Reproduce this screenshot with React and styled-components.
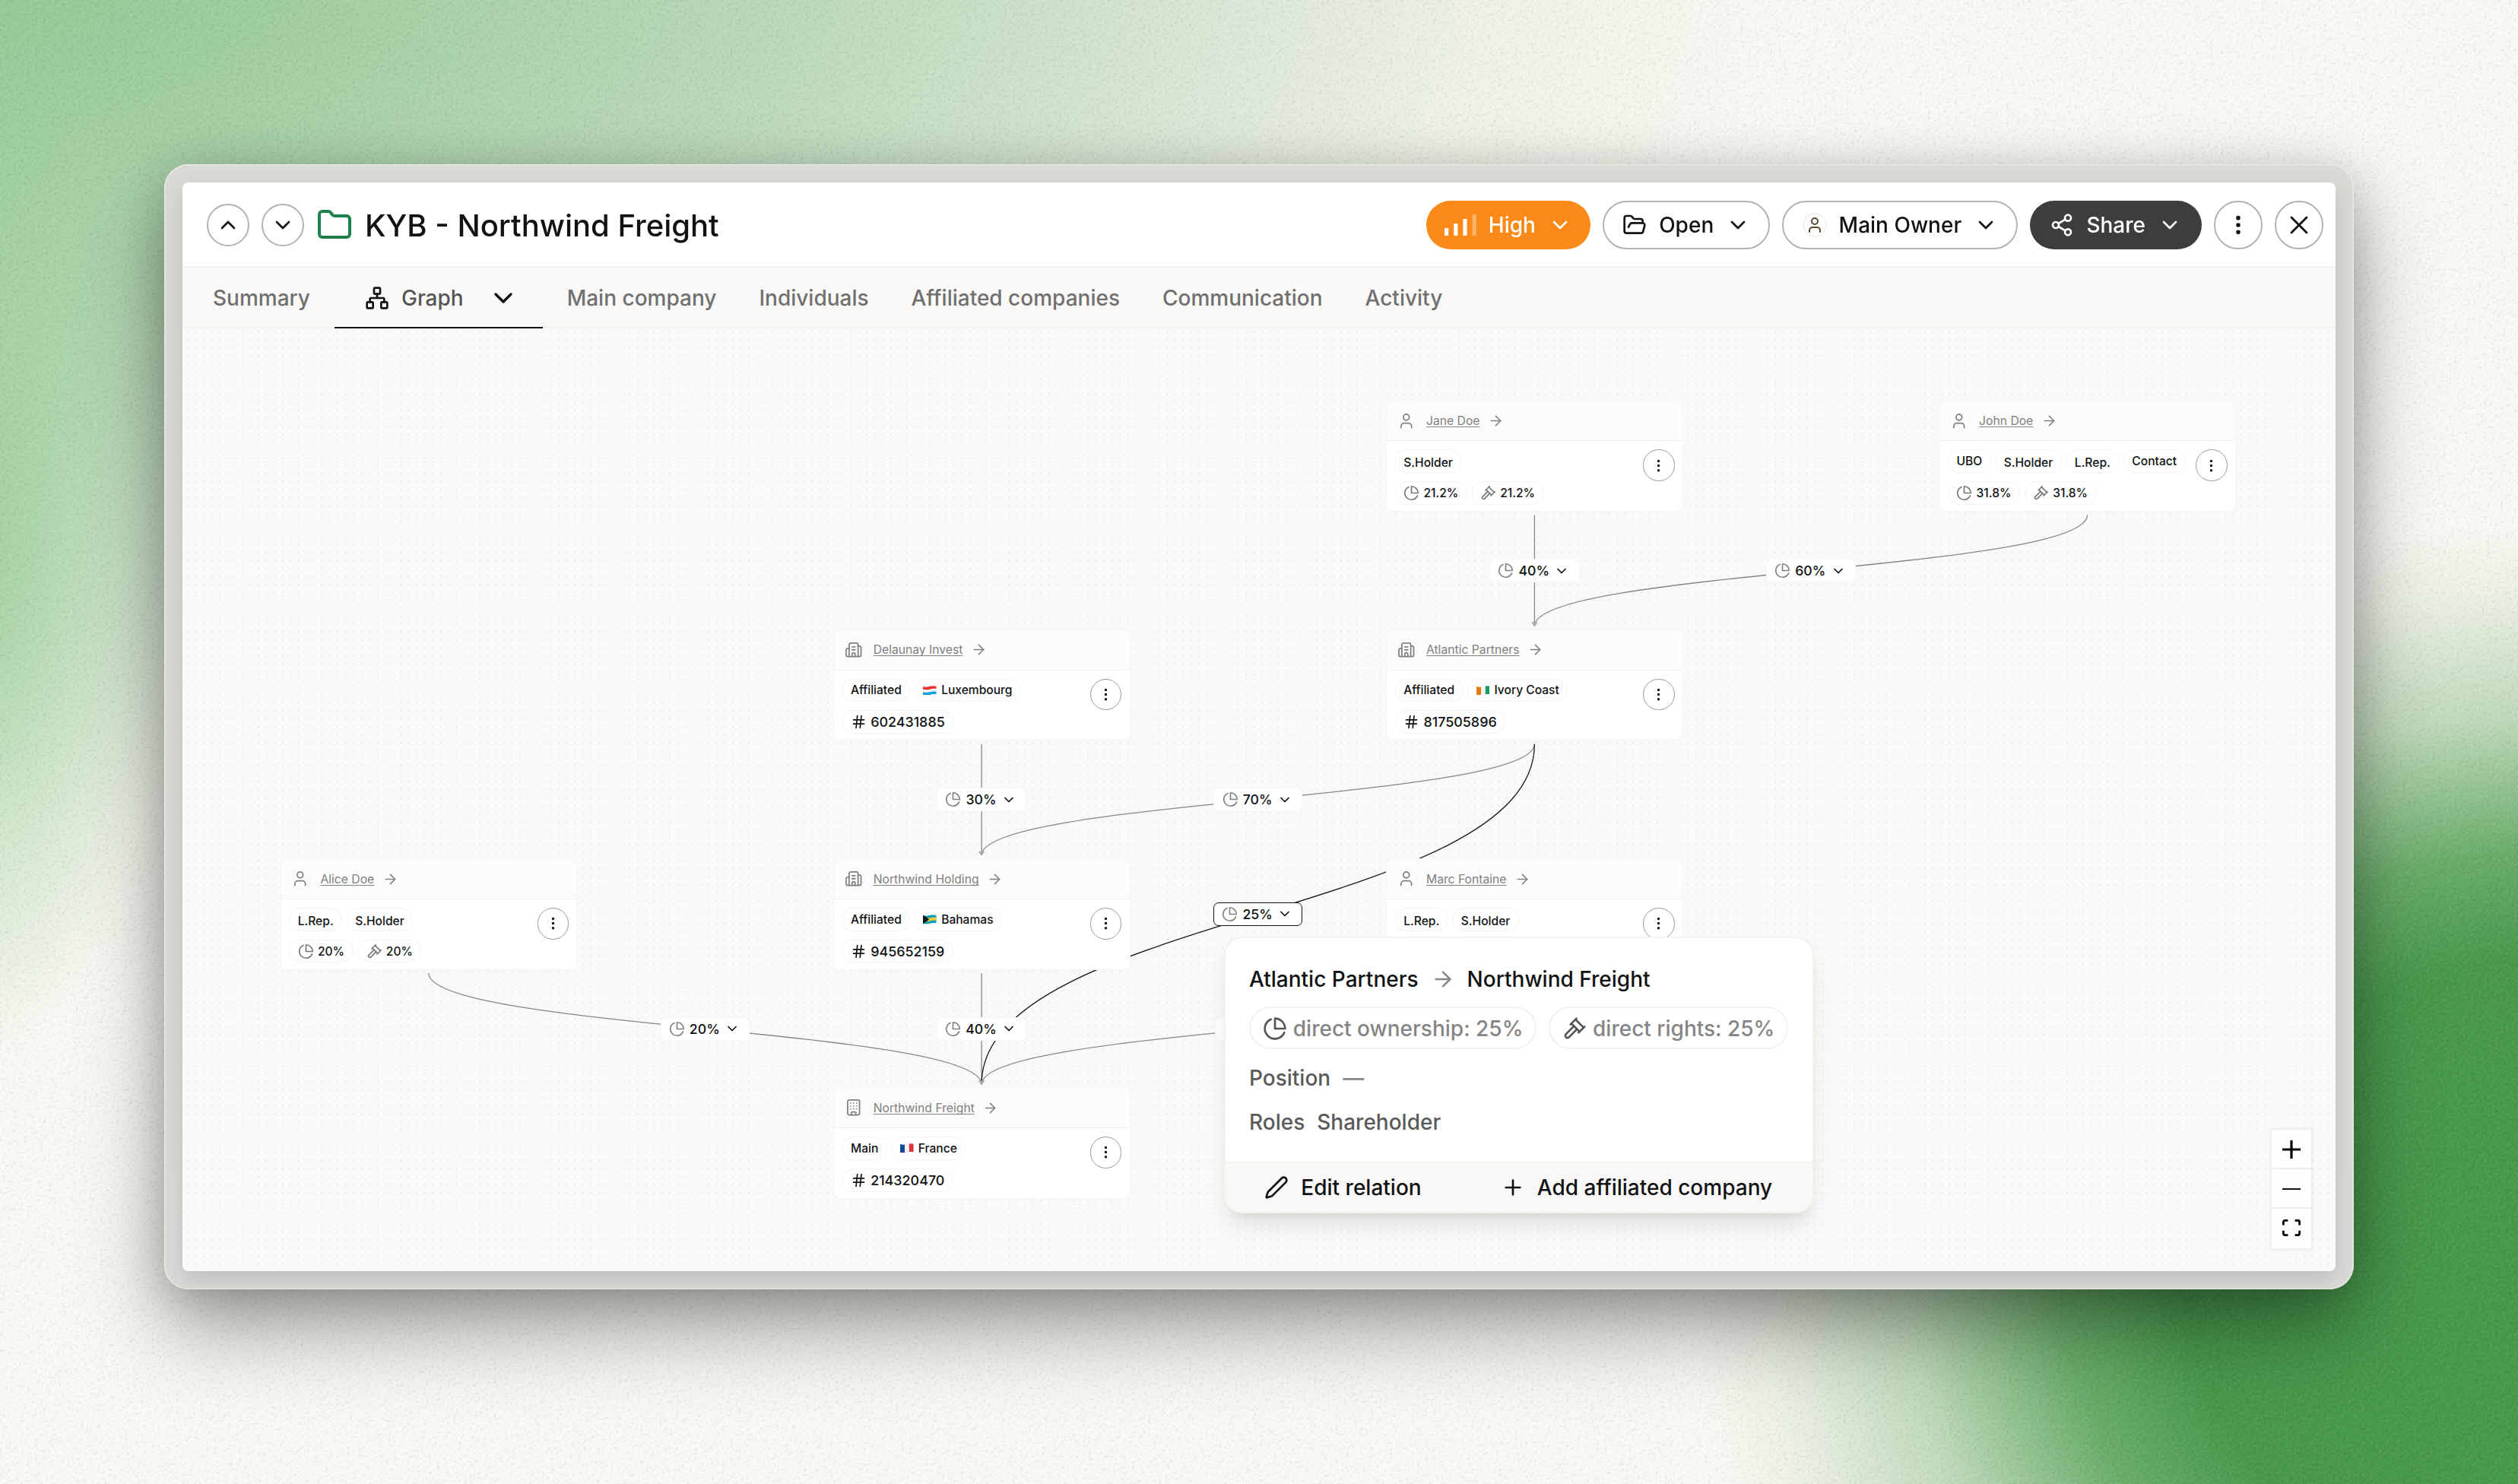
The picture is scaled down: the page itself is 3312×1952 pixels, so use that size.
import React from "react";
import styled, { createGlobalStyle } from "styled-components";
import {
  ArrowRight,
  Building,
  Building2,
  ChevronDown,
  ChevronUp,
  EllipsisVertical,
  Folder,
  FolderOpen,
  Hash,
  Network,
  Pen,
  Plus,
  Share2,
  User,
  X,
} from "lucide-react";

const COLS = [128.8, 856.1, 1583.4, 2310.5];
const ROWS = [94.3, 395.6, 697, 998.2];
const CARD_W = 390.6;
const CARD_H = 146.6;

const nodes = [
  {
    id: "jane",
    name: "Jane Doe",
    col: 2,
    row: 0,
    icon: User,
    tags: ["S.Holder"],
    share: "21.2%",
  },
  {
    id: "john",
    name: "John Doe",
    col: 3,
    row: 0,
    icon: User,
    tags: ["UBO", "S.Holder", "L.Rep.", "Contact"],
    share: "31.8%",
  },
  {
    id: "delaunay",
    name: "Delaunay Invest",
    col: 1,
    row: 1,
    icon: Building2,
    tags: ["Affiliated"],
    country: "Luxembourg",
    flag: "lu",
    number: "602431885",
  },
  {
    id: "atlantic",
    name: "Atlantic Partners",
    col: 2,
    row: 1,
    icon: Building2,
    tags: ["Affiliated"],
    country: "Ivory Coast",
    flag: "ci",
    number: "817505896",
  },
  {
    id: "alice",
    name: "Alice Doe",
    col: 0,
    row: 2,
    icon: User,
    tags: ["L.Rep.", "S.Holder"],
    share: "20%",
  },
  {
    id: "holding",
    name: "Northwind Holding",
    col: 1,
    row: 2,
    icon: Building2,
    tags: ["Affiliated"],
    country: "Bahamas",
    flag: "bs",
    number: "945652159",
  },
  {
    id: "marc",
    name: "Marc Fontaine",
    col: 2,
    row: 2,
    icon: User,
    tags: ["L.Rep.", "S.Holder"],
    share: "15%",
  },
  {
    id: "freight",
    name: "Northwind Freight",
    col: 1,
    row: 3,
    icon: Building,
    tags: ["Main"],
    country: "France",
    flag: "fr",
    number: "214320470",
  },
];

const edges = [
  { from: [2, 0], to: [2, 1], label: "40%" },
  { from: [3, 0], to: [2, 1], label: "60%" },
  { from: [1, 1], to: [1, 2], label: "30%" },
  { from: [2, 1], to: [1, 2], label: "70%" },
  { from: [0, 2], to: [1, 3], label: "20%" },
  { from: [1, 2], to: [1, 3], label: "40%" },
  { from: [2, 2], to: [1, 3], label: "15%" },
  { from: [2, 1], to: [1, 3], label: "25%", selected: true },
];

function edgePoints({ from, to }) {
  return {
    sx: COLS[from[0]] + CARD_W / 2 - 0.3,
    sy: ROWS[from[1]] + CARD_H + 4.5,
    tx: COLS[to[0]] + CARD_W / 2 - 0.3,
    ty: ROWS[to[1]] - 4,
  };
}

function PieIcon({ size }) {
  return (
    <LineIcon viewBox="0 0 24 24" $size={size}>
      <path d="M21.21 15.89A10 10 0 1 1 8 2.83" />
      <path d="M22 12A10 10 0 0 0 12 2v10z" />
    </LineIcon>
  );
}

function GavelIcon({ size }) {
  return (
    <LineIcon viewBox="0 0 24 24" $size={size}>
      <path d="m14.5 12.5-8 8a2.119 2.119 0 1 1-3-3l8-8" />
      <path d="m16 16 6-6" />
      <path d="m8 8 6-6" />
      <path d="m9 7 8 8" />
      <path d="m21 11-8-8" />
    </LineIcon>
  );
}

function Flag({ code }) {
  return (
    <FlagIcon viewBox="0 0 26 18">
      <clipPath id={`wave-${code}`}>
        <path d="M0 1.5C5 3 8 2.6 13 1.2S21 .2 26 1v15.6c-5-.8-8-.4-13 .9s-8 1.4-13 .1z" />
      </clipPath>
      <g clipPath={`url(#wave-${code})`}>
        {code === "fr" && (
          <>
            <rect width="26" height="18" fill="#f3f3f3" />
            <rect width="8.7" height="18" fill="#11499c" />
            <rect x="17.3" width="8.7" height="18" fill="#dd3038" />
          </>
        )}
        {code === "ci" && (
          <>
            <rect width="26" height="18" fill="#f3f3f3" />
            <rect width="8.7" height="18" fill="#e07a12" />
            <rect x="17.3" width="8.7" height="18" fill="#0c9b62" />
          </>
        )}
        {code === "lu" && (
          <>
            <rect width="26" height="18" fill="#f3f3f3" />
            <path d="M0 0h26v6c-5-.8-8-.4-13 .8S5 8 0 7z" fill="#e8312f" />
            <path d="M0 18V12.4c5 1 8 .8 13-.4s8-1.4 13-.6V18z" fill="#14a0dc" />
          </>
        )}
        {code === "bs" && (
          <>
            <rect width="26" height="18" fill="#12a0b5" />
            <path
              d="M0 7c5 1 8 .8 13-.4S21 5.2 26 6v5.4c-5-.8-8-.4-13 .8S5 13.4 0 12.4z"
              fill="#f6cf38"
            />
            <path d="M0 0l12 9.6L0 18z" fill="#15171a" />
          </>
        )}
      </g>
    </FlagIcon>
  );
}

function GraphNode({ node }) {
  const Icon = node.icon;
  return (
    <Card $col={node.col} $row={node.row}>
      <CardHead>
        <Avatar>
          <Icon size={23.5} strokeWidth={1.8} />
        </Avatar>
        <CardName>{node.name}</CardName>
        <ArrowRight size={21} strokeWidth={1.8} />
      </CardHead>
      <CardBody>
        <CardRows>
          <PillRow>
            {node.tags.map((tag) => (
              <Pill key={tag} $low={tag.includes(".")}>
                {tag}
              </Pill>
            ))}
            {node.country && (
              <Pill>
                <Flag code={node.flag} />
                {node.country}
              </Pill>
            )}
          </PillRow>
          <PillRow>
            {node.share && (
              <>
                <Pill>
                  <PieIcon size={21} />
                  {node.share}
                </Pill>
                <Pill>
                  <GavelIcon size={21} />
                  {node.share}
                </Pill>
              </>
            )}
            {node.number && (
              <Pill $number>
                <Hash size={21} strokeWidth={1.9} />
                {node.number}
              </Pill>
            )}
          </PillRow>
        </CardRows>
        <NodeMenu>
          <EllipsisVertical size={21} strokeWidth={2} />
        </NodeMenu>
      </CardBody>
    </Card>
  );
}

function RelationPopup() {
  return (
    <Popup>
      <PopupBody>
        <PopupTitle>
          Atlantic Partners
          <ArrowRight size={32} strokeWidth={1.9} />
          Northwind Freight
        </PopupTitle>
        <PopupChips>
          <Chip>
            <PieIcon size={32} />
            direct ownership: 25%
          </Chip>
          <Chip>
            <GavelIcon size={32} />
            direct rights: 25%
          </Chip>
        </PopupChips>
        <PopupLine>
          Position <Muted>—</Muted>
        </PopupLine>
        <PopupLine>
          Roles <span>Shareholder</span>
        </PopupLine>
      </PopupBody>
      <PopupFooter>
        <FooterAction $grow={309}>
          <Pen size={32} />
          Edit relation
        </FooterAction>
        <FooterAction $grow={463}>
          <Plus size={32} />
          Add affiliated company
        </FooterAction>
      </PopupFooter>
    </Popup>
  );
}

function Graph() {
  return (
    <Canvas>
      <Layer>
        <defs>
          <pattern
            id="dots"
            x="1.8"
            y="-0.9"
            width="10.389"
            height="10.389"
            patternUnits="userSpaceOnUse"
          >
            <circle cx="5.195" cy="5.195" r="0.65" fill="#aee0cc" />
          </pattern>
        </defs>
        <rect width="100%" height="100%" fill="url(#dots)" />
        {edges.map((edge) => {
          const { sx, sy, tx, ty } = edgePoints(edge);
          const my = (sy + ty) / 2;
          return (
            <g key={`${edge.from}-${edge.to}`}>
              <Edge
                d={`M${sx} ${sy}C${sx} ${my} ${tx} ${my} ${tx} ${ty}`}
                $selected={edge.selected}
              />
              <path
                d={`M${tx - 3.8} ${ty - 5}h7.6l-3 4.6h-1.6z`}
                fill="#a9a9ad"
              />
            </g>
          );
        })}
      </Layer>
      {edges.map((edge) => {
        const { sx, sy, tx, ty } = edgePoints(edge);
        return (
          <EdgeAnchor
            key={`${edge.from}-${edge.to}`}
            style={{ left: (sx + tx) / 2, top: (sy + ty) / 2 }}
          >
            <EdgeLabel $selected={edge.selected}>
              <PieIcon size={21} />
              {edge.label}
              <ChevronDown size={20} strokeWidth={2.1} />
            </EdgeLabel>
          </EdgeAnchor>
        );
      })}
      {nodes.map((node) => (
        <GraphNode key={node.id} node={node} />
      ))}
      <RelationPopup />
      <ZoomControls>
        <ZoomButton>
          <svg viewBox="0 0 32 32" width="24">
            <path d="M32 18.133H18.133V32h-4.266V18.133H0v-4.266h13.867V0h4.266v13.867H32z" />
          </svg>
        </ZoomButton>
        <ZoomButton>
          <MinusBar />
        </ZoomButton>
        <ZoomButton>
          <svg viewBox="0 0 32 30" width="24">
            <path d="M3.692 4.63c0-.53.4-.938.939-.938h5.215V0H4.708C2.13 0 0 2.054 0 4.63v5.216h3.692V4.631zM27.354 0h-5.2v3.692h5.17c.53 0 .984.4.984.939v5.215H32V4.631A4.624 4.624 0 0027.354 0zm.954 24.83c0 .532-.4.94-.939.94h-5.215v3.768h5.215c2.577 0 4.631-2.13 4.631-4.707v-5.139h-3.692v5.139zm-23.677.94c-.531 0-.939-.4-.939-.94v-5.138H0v5.139c0 2.577 2.13 4.707 4.708 4.707h5.138V25.77H4.631z" />
          </svg>
        </ZoomButton>
      </ZoomControls>
    </Canvas>
  );
}

function Header() {
  return (
    <HeaderBar>
      <HeaderLeft>
        <NavButton>
          <ChevronUp size={32} />
        </NavButton>
        <NavButton>
          <ChevronDown size={32} />
        </NavButton>
        <Title>
          <Folder size={48} />
          KYB - Northwind Freight
        </Title>
      </HeaderLeft>
      <HeaderRight>
        <ActionButton $color="#fff" $background="#fc8a19" $inset={24}>
          <Bars viewBox="0 0 42 28">
            <rect y="18" width="5.2" height="10" rx="1" />
            <rect x="12.2" y="12" width="5.2" height="16" rx="1" />
            <rect x="24.4" y="6" width="5.2" height="22" rx="1" />
            <rect x="36.6" width="5.2" height="28" rx="1" opacity="0.35" />
          </Bars>
          High
          <ChevronDown size={32} />
        </ActionButton>
        <ActionButton $outlined>
          <FolderOpen size={32} />
          Open
          <ChevronDown size={32} />
        </ActionButton>
        <ActionButton $outlined>
          <OwnerAvatar>
            <User size={24} />
          </OwnerAvatar>
          Main Owner
          <ChevronDown size={32} />
        </ActionButton>
        <ActionButton $color="#fff" $background="#3d3d3d" $inset={26}>
          <Share2 size={32} />
          Share
          <ChevronDown size={32} />
        </ActionButton>
        <RoundButton>
          <EllipsisVertical size={32} strokeWidth={2.2} />
        </RoundButton>
        <RoundButton>
          <X size={40} strokeWidth={1.7} />
        </RoundButton>
      </HeaderRight>
    </HeaderBar>
  );
}

function Tabs() {
  return (
    <TabBar>
      <Tab>Summary</Tab>
      <ActiveTab>
        <Network size={32} />
        <span>Graph</span>
        <ChevronDown size={40} />
      </ActiveTab>
      <Tab>Main company</Tab>
      <Tab>Individuals</Tab>
      <Tab>Affiliated companies</Tab>
      <Tab>Communication</Tab>
      <Tab>Activity</Tab>
    </TabBar>
  );
}

export default function App() {
  return (
    <Backdrop>
      <GlobalStyle />
      <Grain>
        <filter
          id="grain"
          x="0"
          y="0"
          width="100%"
          height="100%"
          colorInterpolationFilters="sRGB"
        >
          <feTurbulence
            type="fractalNoise"
            baseFrequency="0.28"
            numOctaves="3"
          />
          <feColorMatrix
            values="1.1 1.1 1.1 0 -1.15
                    1.1 1.1 1.1 0 -1.15
                    1.1 1.1 1.1 0 -1.15
                    0 0 0 0 1"
          />
        </filter>
        <rect width="100%" height="100%" filter="url(#grain)" />
      </Grain>
      <Frame>
        <Screen>
          <Header />
          <Tabs />
          <Graph />
        </Screen>
      </Frame>
    </Backdrop>
  );
}

const GlobalStyle = createGlobalStyle`
  * {
    box-sizing: border-box;
  }
  body {
    margin: 0;
    font-family: Inter, "Liberation Sans", sans-serif;
    color: #111214;
  }
  svg {
    display: block;
    flex-shrink: 0;
  }
`;

const Backdrop = styled.div`
  width: 3312px;
  height: 1952px;
  position: relative;
  overflow: hidden;
  display: flex;
  align-items: flex-start;
  padding: 216px 0 0 216px;
  background:
    radial-gradient(
      ellipse 34% 51% at 101% 86%,
      #45994a 0%,
      #48994c 42%,
      rgba(80, 160, 82, 0.85) 56%,
      rgba(120, 180, 118, 0.45) 74%,
      rgba(150, 195, 146, 0.15) 90%,
      rgba(160, 200, 155, 0) 100%
    ),
    radial-gradient(
      ellipse 7.5% 34% at -1% 38%,
      rgba(125, 195, 125, 0.55) 0%,
      rgba(140, 205, 140, 0.33) 50%,
      rgba(160, 210, 158, 0) 100%
    ),
    radial-gradient(
      ellipse 76% 76% at -4% -8%,
      #8ac489 0%,
      #a2cfa2 25%,
      #bbd9ba 48%,
      rgba(206, 225, 203, 0.85) 66%,
      rgba(228, 236, 221, 0.5) 84%,
      rgba(247, 246, 240, 0) 100%
    ),
    #faf8f3;
`;

const Grain = styled.svg`
  position: absolute;
  inset: 0;
  width: 100%;
  height: 100%;
  opacity: 0.06;
  mix-blend-mode: hard-light;
`;

const Frame = styled.div`
  position: relative;
  width: 2880px;
  height: 1480px;
  padding: 24px;
  border-radius: 32px;
  background: linear-gradient(#dad9d3, #dadad8);
  box-shadow:
    inset 0 0 0 1.5px #e9e8e4,
    0 52px 110px rgba(0, 0, 0, 0.36),
    0 10px 60px rgba(0, 0, 0, 0.16);
`;

const Screen = styled.div`
  display: flex;
  flex-direction: column;
  width: 2832px;
  height: 1432px;
  border-radius: 8px;
  overflow: hidden;
  background: #fff;
  box-shadow: 0 12px 28px rgba(0, 0, 0, 0.13);
`;

const HeaderBar = styled.header`
  display: flex;
  align-items: center;
  justify-content: space-between;
  height: 112px;
  padding: 2px 16px 0 32px;
  border-bottom: 2px solid #f3f2ee;
`;

const HeaderLeft = styled.div`
  display: flex;
  align-items: center;
  gap: 16px;
`;

const HeaderRight = styled(HeaderLeft)``;

const NavButton = styled.button`
  display: flex;
  align-items: center;
  justify-content: center;
  width: 56px;
  height: 56px;
  padding: 0;
  border: 2px solid #b3b3b3;
  border-radius: 50%;
  background-color: #fff;
  color: #111214;
`;

const RoundButton = styled(NavButton)`
  width: 64px;
  height: 64px;
`;

const Title = styled.h1`
  display: flex;
  align-items: center;
  gap: 16px;
  margin: 0;
  font-size: 40px;
  font-weight: 500;
  svg {
    color: #1f8049;
  }
`;

const ActionButton = styled.button`
  display: flex;
  align-items: center;
  gap: 16px;
  height: 64px;
  padding: 0 ${({ $inset }) => $inset || 24.2}px;
  border: ${({ $outlined }) => ($outlined ? "2px solid #b3b3b3" : "none")};
  border-radius: 32px;
  background-color: ${({ $background }) => $background || "#fff"};
  color: ${({ $color }) => $color || "#111214"};
  font-family: inherit;
  font-size: 28px;
  font-weight: 500;
`;

const Bars = styled.svg`
  width: 42px;
  height: 28px;
  fill: currentColor;
`;

const OwnerAvatar = styled.span`
  display: flex;
  align-items: center;
  justify-content: center;
  width: 32px;
  height: 32px;
  border: 2px solid #f3f1ea;
  border-radius: 50%;
  color: #56482f;
`;

const TabBar = styled.nav`
  display: flex;
  flex-shrink: 0;
  gap: 56px;
  height: 80px;
  padding-left: 40px;
  border-bottom: 2px solid #f3f2ec;
  background-color: #faf9f7;
`;

const Tab = styled.div`
  display: flex;
  align-items: center;
  padding-top: 2px;
  font-size: 28px;
  font-weight: 500;
  color: #707070;
`;

const ActiveTab = styled(Tab)`
  height: 80px;
  margin: 0 -24px;
  padding: 2px 32px 0 40px;
  border-bottom: 2px solid #111214;
  color: #555;
  svg {
    color: #111214;
  }
  span {
    margin: 0 32px 0 16px;
  }
`;

const Canvas = styled.main`
  position: relative;
  flex: 1;
  background-color: #faf9f8;
`;

const Layer = styled.svg`
  position: absolute;
  inset: 0;
  width: 100%;
  height: 100%;
`;

const Edge = styled.path`
  fill: none;
  stroke: ${({ $selected }) => ($selected ? "#18191b" : "#868686")};
  stroke-width: 1.3;
`;

const LineIcon = styled.svg`
  width: ${({ $size }) => $size}px;
  height: ${({ $size }) => $size}px;
  fill: none;
  stroke: currentColor;
  stroke-width: ${({ $size }) => ($size > 24 ? 2 : 1.9)};
  stroke-linecap: round;
  stroke-linejoin: round;
`;

const FlagIcon = styled.svg`
  width: 17.8px;
  height: 12.4px;
  margin-right: 6px;
`;

const EdgeAnchor = styled.div`
  position: absolute;
  display: flex;
  align-items: center;
  justify-content: center;
  width: 0;
  height: 0;
`;

const EdgeLabel = styled.div`
  display: flex;
  flex-shrink: 0;
  align-items: center;
  height: 31px;
  padding: 0 12.3px 0 10.3px;
  border: 1px solid ${({ $selected }) => ($selected ? "#111214" : "#f7f6f5")};
  border-radius: 7px;
  background-color: #fff;
  font-size: 17.7px;
  font-weight: 500;
  svg:first-child {
    margin-right: 6px;
    color: #808080;
  }
  svg:last-child {
    margin-left: 6.3px;
  }
`;

const Card = styled.article`
  position: absolute;
  left: ${({ $col }) => COLS[$col]}px;
  top: ${({ $row }) => ROWS[$row]}px;
  width: ${CARD_W}px;
  height: ${CARD_H}px;
  border: 1px solid #f5f5f3;
  border-radius: 10px;
  background-color: #fff;
  overflow: hidden;
`;

const CardHead = styled.div`
  display: flex;
  align-items: center;
  height: 53px;
  padding-left: 10.4px;
  border-bottom: 1px solid #f1f1ee;
  background-color: #fcfcfc;
  color: #808080;
`;

const Avatar = styled.span`
  display: flex;
  align-items: center;
  justify-content: center;
  width: 30px;
  height: 30px;
  border: 1px solid #f5f5f4;
  border-radius: 50%;
`;

const CardName = styled.a`
  margin: 0 10.6px 0 11.2px;
  font-size: 15.7px;
  text-decoration: underline;
  text-decoration-skip-ink: none;
  text-underline-offset: 2px;
`;

const CardBody = styled.div`
  display: flex;
  align-items: flex-start;
  justify-content: space-between;
  padding: 11px 10.4px;
`;

const CardRows = styled.div`
  display: flex;
  flex-direction: column;
  gap: 11px;
`;

const PillRow = styled.div`
  display: flex;
  gap: 5.6px;
`;

const Pill = styled.span`
  display: flex;
  align-items: center;
  height: 30.7px;
  padding: ${({ $low }) => ($low ? "4px" : "0")} 10.5px 0;
  border: 1px solid #f3f3eb;
  border-radius: 16px;
  font-size: ${({ $number }) => ($number ? 17.9 : 15.58)}px;
  font-weight: 500;
  white-space: nowrap;
  ${LineIcon} {
    margin-right: 5.2px;
    color: #777;
  }
  svg.lucide {
    margin-right: 5.2px;
  }
`;

const NodeMenu = styled.button`
  display: flex;
  align-items: center;
  justify-content: center;
  width: 41.5px;
  height: 41.5px;
  padding: 0;
  border: 1px solid #999;
  border-radius: 50%;
  background-color: #fff;
  color: #111214;
`;

const Popup = styled.section`
  position: absolute;
  left: 1370px;
  top: 800px;
  display: flex;
  flex-direction: column;
  width: 776px;
  height: 364px;
  border: 2px solid #f3f2ec;
  border-radius: 24px;
  background-color: #fff;
  overflow: hidden;
  box-shadow:
    0 20px 30px -6px rgba(0, 0, 0, 0.1),
    0 8px 12px -8px rgba(0, 0, 0, 0.1);
`;

const PopupBody = styled.div`
  flex: 1;
  padding: 30px 31px 0;
  font-size: 28px;
  font-weight: 500;
`;

const PopupTitle = styled.div`
  display: flex;
  align-items: center;
  gap: 16px;
  height: 48px;
  svg {
    color: #888;
  }
`;

const PopupChips = styled.div`
  display: flex;
  gap: 16px;
  margin: 12px 0 9px;
`;

const Chip = styled.span`
  display: flex;
  align-items: center;
  gap: 8px;
  height: 56px;
  padding: 1px 15.8px 0;
  border: 2px solid #f3f2ec;
  border-radius: 28px;
  font-weight: 500;
  color: #858585;
  white-space: nowrap;
  svg {
    color: #555;
  }
`;

const PopupLine = styled.div`
  display: flex;
  align-items: center;
  gap: 16px;
  height: 58px;
  color: #5a5a5a;
`;

const Muted = styled.span`
  color: #8a8a8a;
`;

const PopupFooter = styled.footer`
  display: flex;
  height: 66px;
  border-top: 2px solid #f3f2ec;
  background-color: #faf8f7;
`;

const FooterAction = styled.button`
  display: flex;
  align-items: center;
  justify-content: center;
  gap: 16px;
  flex: ${({ $grow }) => $grow};
  padding: 0;
  border: none;
  background: none;
  color: #111214;
  font-family: inherit;
  font-size: 28px;
  font-weight: 500;
`;

const ZoomControls = styled.div`
  position: absolute;
  right: 32px;
  bottom: 30px;
  display: flex;
  flex-direction: column;
  box-shadow: 0 0 4px 2px rgba(0, 0, 0, 0.06);
`;

const ZoomButton = styled.button`
  display: flex;
  align-items: center;
  justify-content: center;
  width: 52px;
  height: 52px;
  padding: 2px 0 0;
  border: none;
  border-bottom: 2px solid #eee;
  background-color: #fefefe;
  color: #111214;
  &:last-child {
    padding: 0 0 2px;
    border-bottom: none;
  }
`;

const MinusBar = styled.span`
  width: 24px;
  height: 2px;
  background-color: currentColor;
`;
